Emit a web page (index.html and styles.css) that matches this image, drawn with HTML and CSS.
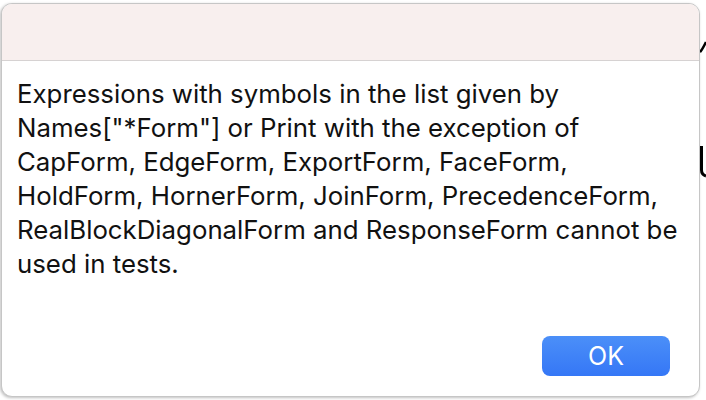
FILE: index.html
```html
<!DOCTYPE html>
<html>
<head>
<meta charset="utf-8">
<link rel="stylesheet" href="styles.css">
</head>
<body>
<svg class="behind" width="6" height="400" viewBox="0 0 6 400">
  <path d="M0 52 C2 50 4 46 6 42" stroke="#000" stroke-width="2.5" fill="none"/>
  <path d="M1.5 146 L1.5 170 C1.5 173 3 175 6 176" stroke="#000" stroke-width="3" fill="none"/>
</svg>
<div class="window">
  <div class="titlebar"></div>
  <div class="content">
    <p class="message">Expressions with symbols in the list given by Names["*Form"] or Print with the exception of CapForm, EdgeForm, ExportForm, FaceForm, HoldForm, HornerForm, JoinForm, PrecedenceForm, RealBlockDiagonalForm and ResponseForm cannot be used in tests.</p>
    <div class="actions">
      <button class="ok">OK</button>
    </div>
  </div>
</div>
</body>
</html>
```
FILE: styles.css
```css
html, body {
  margin: 0;
  padding: 0;
  background: #ffffff;
  width: 706px;
  height: 400px;
  overflow: hidden;
}
body {
  position: relative;
  font-family: Inter, "Liberation Sans", sans-serif;
}
.behind {
  position: absolute;
  left: 700px;
  top: 0;
}
.window {
  position: relative;
  margin: 3px 0 0 1px;
  width: 697px;
  height: 392px;
  border: 1px solid #c6c6c6;
  border-radius: 11px;
  background: #ffffff;
  box-shadow: -1px 1px 3px rgba(0,0,0,0.25);
  display: flex;
  flex-direction: column;
  overflow: hidden;
}
.titlebar {
  height: 56px;
  background: #f8efee;
  border-bottom: 1px solid #d6d2d2;
  flex: none;
}
.content {
  flex: 1;
  display: flex;
  flex-direction: column;
  padding: 16px 29px 20px 15px;
}
.message {
  margin: 0;
  max-width: 680px;
  margin-right: -20px;
  font-size: 25.8px;
  line-height: 34px;
  color: #111;
  letter-spacing: 0;
}
.actions {
  margin-top: auto;
  display: flex;
  justify-content: flex-end;
}
.ok {
  width: 128px;
  height: 40px;
  border: none;
  border-radius: 8px;
  background: linear-gradient(#4b8ff8, #3577f6);
  color: #fff;
  font-family: Inter, "Liberation Sans", sans-serif;
  font-size: 25px;
  padding: 0;
}
```
